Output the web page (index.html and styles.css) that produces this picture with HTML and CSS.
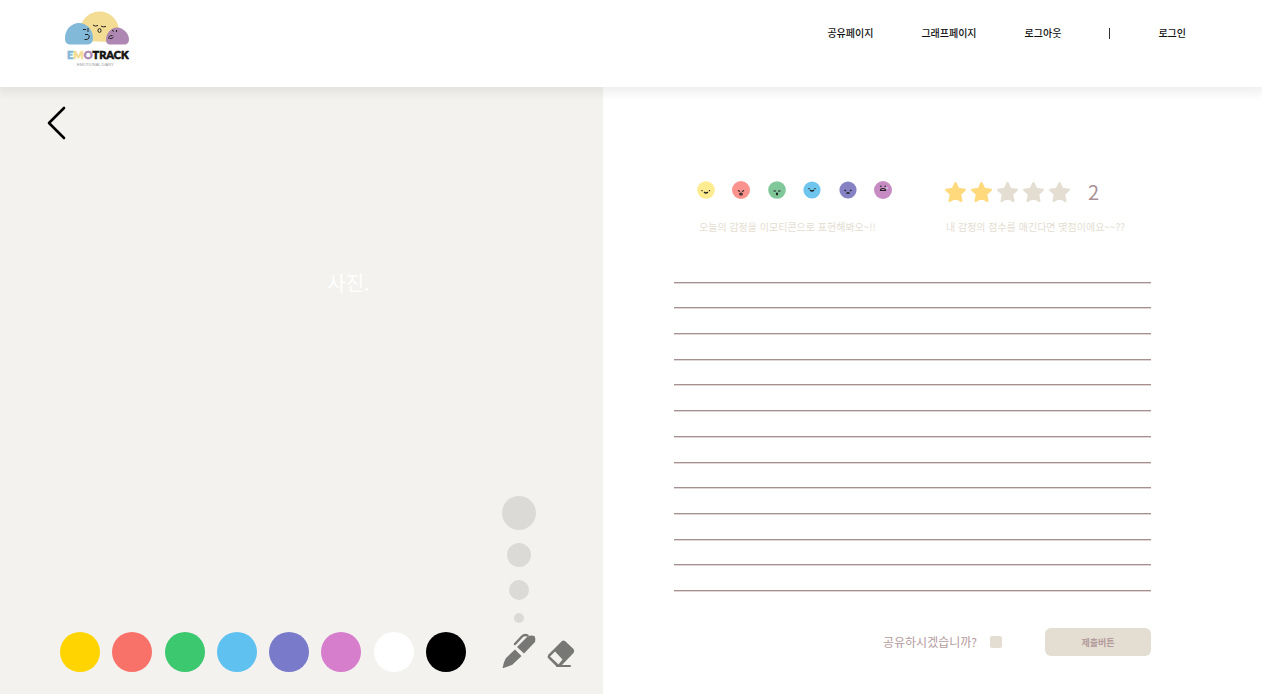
FILE: index.html
```html
<!DOCTYPE html>
<html lang="ko">
<head>
<meta charset="utf-8">
<meta name="viewport" content="width=device-width, initial-scale=1">
<title>EMOTRACK</title>
<link rel="stylesheet" href="styles.css">
</head>
<body>
<header class="header">
  <a class="logo" href="#" aria-label="EMOTRACK">
    <svg width="66" height="58" viewBox="0 0 66 58">
      <path d="M16 30V20a19.500 19.500 0 0 1 39 0v8l-6 3z" fill="#f3dd94"/>
      <path d="M7 33.500C2 33.500 1 31 1 27c0-8 6-15 14-15s14 7 14 15c0 4-2 6.500-6 6.500z" fill="#82b8d8"/>
      <path d="M47 33.500c-4 0-5-2-5-5 0-6 5-12 11-12s12 6 12 12c0 3-2 5-5 5z" fill="#ae88b2"/>
      <g fill="none" stroke="#222" stroke-width="1">
        <path d="M29 14q2 2 5 .5M37 15q2 1.500 5 .5M19 18.500h3M24 17v4M21 23.500h3q2 1 1 3.500-1 2-4.500 1.500M48 19l2 1.500M52.500 19v2M45 28q-1-3.500 3.500-3.500M46 27.500q2 .5 3.500-1.500"/>
        <ellipse cx="35.500" cy="19.500" rx="1.500" ry="2"/>
      </g>
      <text class="logo-name" x="3" y="48"><tspan class="letter-e">E</tspan><tspan class="letter-m">M</tspan><tspan class="letter-o">O</tspan>TRACK</text>
      <text class="logo-sub" x="13" y="55">EMOTIONAL DIARY</text>
    </svg>
  </a>
  <nav class="nav">
    <a href="#">공유페이지</a>
    <a href="#">그래프페이지</a>
    <a href="#">로그아웃</a>
    <span class="divider"></span>
    <a href="#">로그인</a>
  </nav>
</header>
<main class="main">
  <section class="canvas">
    <button class="back" type="button" aria-label="뒤로">
      <svg width="20" height="34" viewBox="0 0 20 34"><path d="M17 2 2 17 17 32" fill="none" stroke="#000" stroke-width="2.600" stroke-linecap="round" stroke-linejoin="round"/></svg>
    </button>
    <p class="photo">사진.</p>
    <div class="tools">
      <div class="palette">
        <button class="color yellow" type="button" aria-label="노랑"></button>
        <button class="color red" type="button" aria-label="빨강"></button>
        <button class="color green" type="button" aria-label="초록"></button>
        <button class="color blue" type="button" aria-label="하늘"></button>
        <button class="color indigo" type="button" aria-label="남색"></button>
        <button class="color pink" type="button" aria-label="분홍"></button>
        <button class="color white" type="button" aria-label="흰색"></button>
        <button class="color black" type="button" aria-label="검정"></button>
      </div>
      <div class="brush">
        <div class="sizes">
          <button class="size xl" type="button" aria-label="34"></button>
          <button class="size lg" type="button" aria-label="24"></button>
          <button class="size md" type="button" aria-label="20"></button>
          <button class="size sm" type="button" aria-label="10"></button>
        </div>
        <button class="tool" type="button" aria-label="펜">
          <svg width="34" height="36" viewBox="0 0 34 36">
            <g fill="#777775"><path d="M13 16.500 19.500 23 10 32Q7 33 1.500 35Q0 35 .8 34Q2 28 4 25z"/><path d="M15 14 25 4Q26.500 2.500 29 2.500L32.500 3Q34 6 33 9L22 20.500z"/></g>
            <path d="M13 11 20 3.500Q22.500 1 25.500 2.500" fill="none" stroke="#777775" stroke-width="2.400" stroke-linecap="round"/>
          </svg>
        </button>
      </div>
      <button class="tool eraser" type="button" aria-label="지우개">
        <svg width="30" height="29" viewBox="0 0 30 29">
          <path d="M2.500 15.500 16 2Q17.500 .8 19 2L27.500 10Q29 12 27.500 14L14.500 27.500 11 28 2.500 19.500Q.8 17.500 2.500 15.500z" fill="#777775"/>
          <path d="M9 12.500 16.500 20.500 12.500 25.500 4 17.500z" fill="#f3f2ee"/>
          <path d="M11 27H24" stroke="#777775" stroke-width="2" stroke-linecap="round"/>
        </svg>
      </button>
    </div>
  </section>
  <form class="diary">
    <div class="ratings">
      <div class="rating">
        <div class="faces">
          <button type="button" aria-label="기쁨"><svg width="18" height="18" viewBox="0 0 18 18"><circle cx="9" cy="9" r="8.800" fill="#ffec90"/><path d="M5 9v1.200M12.500 9v1.200M7 11q2 2 4 0" /></svg></button>
          <button type="button" aria-label="화남"><svg width="18" height="18" viewBox="0 0 18 18"><circle cx="9" cy="9" r="9" fill="#fa938d"/><path d="M6 9.500 8 10.500M12 9.500 10 10.500"/><ellipse cx="9" cy="13" rx="1.200" ry="1"/></svg></button>
          <button type="button" aria-label="평온"><svg width="18" height="18" viewBox="0 0 18 18"><circle cx="9" cy="9" r="8.800" fill="#80c79a"/><path d="M5.500 10H8M10 10h2.500"/><ellipse cx="9" cy="13" rx=".5" ry=".8"/></svg></button>
          <button type="button" aria-label="즐거움"><svg width="18" height="18" viewBox="0 0 18 18"><circle cx="9" cy="9" r="8.600" fill="#6ec6ef"/><path d="M6 7v1.200M12 7v1.200M7 9q2 2 4 0"/></svg></button>
          <button type="button" aria-label="우울"><svg width="18" height="18" viewBox="0 0 18 18"><circle cx="9" cy="9" r="8.600" fill="#8583c3"/><path d="M5.500 9 7 10M12.500 9 11 10M7.500 12.500q1.500-1.500 3 0"/></svg></button>
          <button type="button" aria-label="놀람"><svg width="18" height="18" viewBox="0 0 18 18"><circle cx="9" cy="9" r="9" fill="#c68bc2"/><path d="M6 5.500 7.500 5M12 5.500 10.500 5M6.500 9.500Q6.500 7.500 9 7.500T11.500 9.500z"/><circle class="tear" cx="13" cy="7" r=".8"/></svg></button>
        </div>
        <p class="hint">오늘의 감정을 이모티콘으로 표현해봐오~!!</p>
      </div>
      <div class="rating">
        <div class="stars">
          <button class="on" type="button" aria-label="1점"><svg width="23" height="22" viewBox="0 0 23 22"><path d="M11.500 2 14.300 7.800 21 8.700 16.200 13.200 17.500 20 11.500 16.800 5.500 20 6.800 13.200 2 8.700 8.700 7.800z"/></svg></button>
          <button class="on" type="button" aria-label="2점"><svg width="23" height="22" viewBox="0 0 23 22"><path d="M11.500 2 14.300 7.800 21 8.700 16.200 13.200 17.500 20 11.500 16.800 5.500 20 6.800 13.200 2 8.700 8.700 7.800z"/></svg></button>
          <button type="button" aria-label="3점"><svg width="23" height="22" viewBox="0 0 23 22"><path d="M11.500 2 14.300 7.800 21 8.700 16.200 13.200 17.500 20 11.500 16.800 5.500 20 6.800 13.200 2 8.700 8.700 7.800z"/></svg></button>
          <button type="button" aria-label="4점"><svg width="23" height="22" viewBox="0 0 23 22"><path d="M11.500 2 14.300 7.800 21 8.700 16.200 13.200 17.500 20 11.500 16.800 5.500 20 6.800 13.200 2 8.700 8.700 7.800z"/></svg></button>
          <button type="button" aria-label="5점"><svg width="23" height="22" viewBox="0 0 23 22"><path d="M11.500 2 14.300 7.800 21 8.700 16.200 13.200 17.500 20 11.500 16.800 5.500 20 6.800 13.200 2 8.700 8.700 7.800z"/></svg></button>
          <output class="score">2</output>
        </div>
        <p class="hint">내 감정의 점수를 매긴다면 몇점이에요~~??</p>
      </div>
    </div>
    <div class="lines">
      <input type="text" aria-label="1줄"><input type="text" aria-label="2줄"><input type="text" aria-label="3줄"><input type="text" aria-label="4줄"><input type="text" aria-label="5줄"><input type="text" aria-label="6줄"><input type="text" aria-label="7줄"><input type="text" aria-label="8줄"><input type="text" aria-label="9줄"><input type="text" aria-label="10줄"><input type="text" aria-label="11줄"><input type="text" aria-label="12줄"><input type="text" aria-label="13줄">
    </div>
    <div class="actions">
      <label class="share" for="share">공유하시겠습니까?</label>
      <input class="check" id="share" type="checkbox">
      <button class="submit" type="submit">제출버튼</button>
    </div>
  </form>
</main>
</body>
</html>
```

FILE: styles.css
```css
* {
  box-sizing: border-box;
}

body {
  margin: 0;
  min-height: 100vh;
  display: flex;
  flex-direction: column;
  background: #fff;
  font-family: "Noto Sans CJK KR", sans-serif;
}

button {
  padding: 0;
  border: 0;
  background: none;
  font-family: inherit;
  cursor: pointer;
}

p {
  margin: 0;
}

svg {
  display: block;
}

.header {
  display: flex;
  justify-content: space-between;
  align-items: flex-start;
  min-height: 87px;
  padding: 11px 76px 0 64px;
  background: #fff;
  box-shadow: 0 5px 8px 2px rgba(0, 0, 0, 0.06);
  z-index: 1;
}

.logo svg {
  overflow: visible;
}

.logo-name {
  font: 900 11px Lato, sans-serif;
  fill: #111;
  stroke: #111;
  stroke-width: 0.6px;
}

.letter-e { fill: #82b8d8; stroke: #82b8d8; }
.letter-m { fill: #f3dd94; stroke: #f3dd94; }
.letter-o { fill: #ae88b2; stroke: #ae88b2; }

.logo-sub {
  font: 4px "Liberation Sans", sans-serif;
  fill: #999;
}

.nav {
  display: flex;
  align-items: center;
  gap: 48px;
  padding-top: 14px;
  font-size: 10px;
  font-weight: 500;
  line-height: 16px;
}

.nav a {
  color: #111;
  text-decoration: none;
}

.divider {
  width: 1px;
  height: 11px;
  background: #333;
}

.main {
  flex: 1;
  display: grid;
  grid-template-columns: 603fr 659fr;
}

.canvas {
  display: flex;
  flex-direction: column;
  padding: 19px 27px 22px 47px;
  background: #f3f2ee;
}

.back {
  align-self: flex-start;
}

.photo {
  padding: 128px 0 0 74px;
  text-align: center;
  color: #fff;
  font-size: 20px;
  line-height: 30px;
}

.tools {
  display: flex;
  align-items: flex-end;
  margin-top: auto;
  padding-left: 13px;
}

.palette {
  display: flex;
  justify-content: space-between;
  width: 406px;
}

.color {
  width: 40px;
  height: 40px;
  border-radius: 50%;
}

.yellow { background: #ffd400; }
.red { background: #f97269; }
.green { background: #3bc86f; }
.blue { background: #5ec1ef; }
.indigo { background: #797aca; }
.pink { background: #d67dcb; }
.white { background: #fff; }
.black { background: #000; }

.brush {
  display: flex;
  flex-direction: column;
  align-items: center;
  gap: 10px;
  margin-left: 36px;
  padding-bottom: 3px;
}

.sizes {
  display: flex;
  flex-direction: column;
  align-items: center;
  gap: 13px;
}

.size {
  border-radius: 50%;
  background: #dbdad6;
}

.xl { width: 34px; height: 34px; }
.lg { width: 24px; height: 24px; }
.md { width: 20px; height: 20px; }
.sm { width: 10px; height: 10px; }

.eraser {
  margin-left: 10px;
  padding-bottom: 4px;
}

.diary {
  padding: 92px 111px 24px 71px;
}

.ratings {
  display: flex;
  justify-content: space-between;
  padding: 0 26px 0 23px;
}

.faces,
.stars {
  display: flex;
  align-items: center;
  height: 26px;
}

.faces {
  justify-content: space-between;
  width: 195px;
  padding-bottom: 4px;
}

.faces path,
.faces ellipse {
  fill: none;
  stroke: #222;
  stroke-width: 1.2;
}

.tear {
  fill: #d8f0ff;
}

.stars {
  gap: 3px;
}

.stars path {
  fill: #e4ddd1;
  stroke: #e4ddd1;
  stroke-width: 2;
  stroke-linejoin: round;
}

.stars .on path {
  fill: #ffd97c;
  stroke: #ffd97c;
}

.score {
  padding-left: 14px;
  color: #a99196;
  font-size: 20px;
  font-weight: 400;
  line-height: 26px;
}

.hint {
  padding: 14px 0 0 2px;
  color: #e4ddd1;
  font-size: 10px;
  line-height: 16px;
}

.lines {
  display: flex;
  flex-direction: column;
  height: 334px;
  margin-top: 22px;
}

.lines input {
  flex: 1;
  width: 100%;
  min-height: 0;
  padding: 0 4px;
  border: 0;
  border-bottom: 1px solid #a68f8f;
  box-shadow: 0 1px #e0d6d6;
  background: none;
  font: 12px "Noto Sans CJK KR", sans-serif;
  outline: 0;
}

.actions {
  display: flex;
  align-items: center;
  justify-content: flex-end;
  padding-top: 37px;
}

.share {
  color: #b39a9c;
  font-size: 12px;
  line-height: 18px;
}

.check {
  appearance: none;
  width: 12px;
  height: 12px;
  margin: 0 43px 0 13px;
  border-radius: 2px;
  background: #e4ddd1;
}

.check:checked {
  background: #b39a9c;
}

.submit {
  width: 106px;
  height: 28px;
  border-radius: 6px;
  background: #e4ddd1;
  color: #b39a9c;
  font-size: 9px;
  font-weight: 700;
}
```
